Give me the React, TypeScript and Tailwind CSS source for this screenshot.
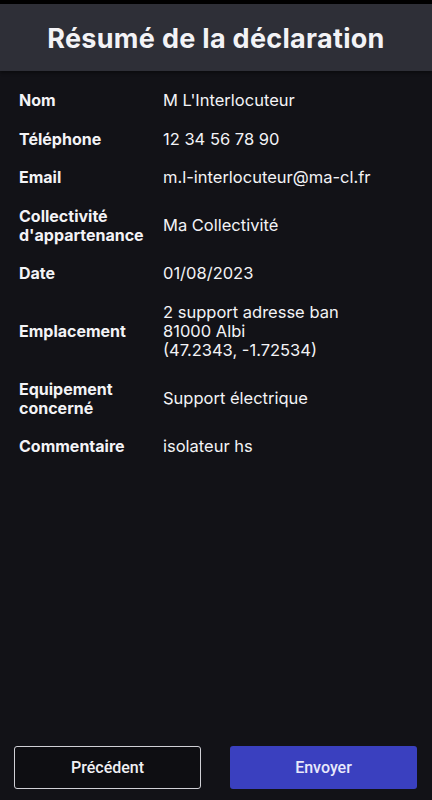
const rows: { label: string[]; value: string[] }[] = [
  { label: ['Nom'], value: ["M L'Interlocuteur"] },
  { label: ['Téléphone'], value: ['12 34 56 78 90'] },
  { label: ['Email'], value: ['m.l-interlocuteur@ma-cl.fr'] },
  { label: ['Collectivité', "d'appartenance"], value: ['Ma Collectivité'] },
  { label: ['Date'], value: ['01/08/2023'] },
  {
    label: ['Emplacement'],
    value: ['2 support adresse ban', '81000 Albi', '(47.2343, -1.72534)'],
  },
  { label: ['Equipement', 'concerné'], value: ['Support électrique'] },
  { label: ['Commentaire'], value: ['isolateur hs'] },
];

export default function App() {
  return (
    <div className="flex h-[800px] w-[432px] flex-col bg-[#121217] text-[#f3f3f6] [font-family:Inter,'Noto_Sans',sans-serif]">
      <div className="h-[4px] bg-black" />
      <header className="flex h-[67px] items-center justify-center bg-[#2e2f37] pt-[3px] shadow-[0_2px_3px_rgba(0,0,0,0.4)]">
        <h1 className="text-[27px] font-bold tracking-[0.3px]">Résumé de la déclaration</h1>
      </header>

      <div className="flex flex-col gap-[19.6px] px-[19px] pt-[20px]">
        {rows.map((row) => (
          <div key={row.label[0]} className="flex items-center leading-[19px]">
            <div className="w-[144px] text-[16px] font-bold">
              {row.label.map((l) => (
                <div key={l}>{l}</div>
              ))}
            </div>
            <div className="text-[16.5px]">
              {row.value.map((v) => (
                <div key={v}>{v}</div>
              ))}
            </div>
          </div>
        ))}
      </div>

      <div className="mt-auto flex gap-[29px] px-[14px] pb-[11px] [font-family:Roboto,sans-serif]">
        <button className="h-[43px] w-[187px] rounded-[3px] border border-[#d0d0d6] bg-[#0e0e12] text-[16px] font-medium text-[#f0f0f4]">
          Précédent
        </button>
        <button className="h-[43px] w-[187px] rounded-[3px] bg-[#3a40bf] text-[16px] font-medium text-[#e8e9fb]">
          Envoyer
        </button>
      </div>
    </div>
  );
}
